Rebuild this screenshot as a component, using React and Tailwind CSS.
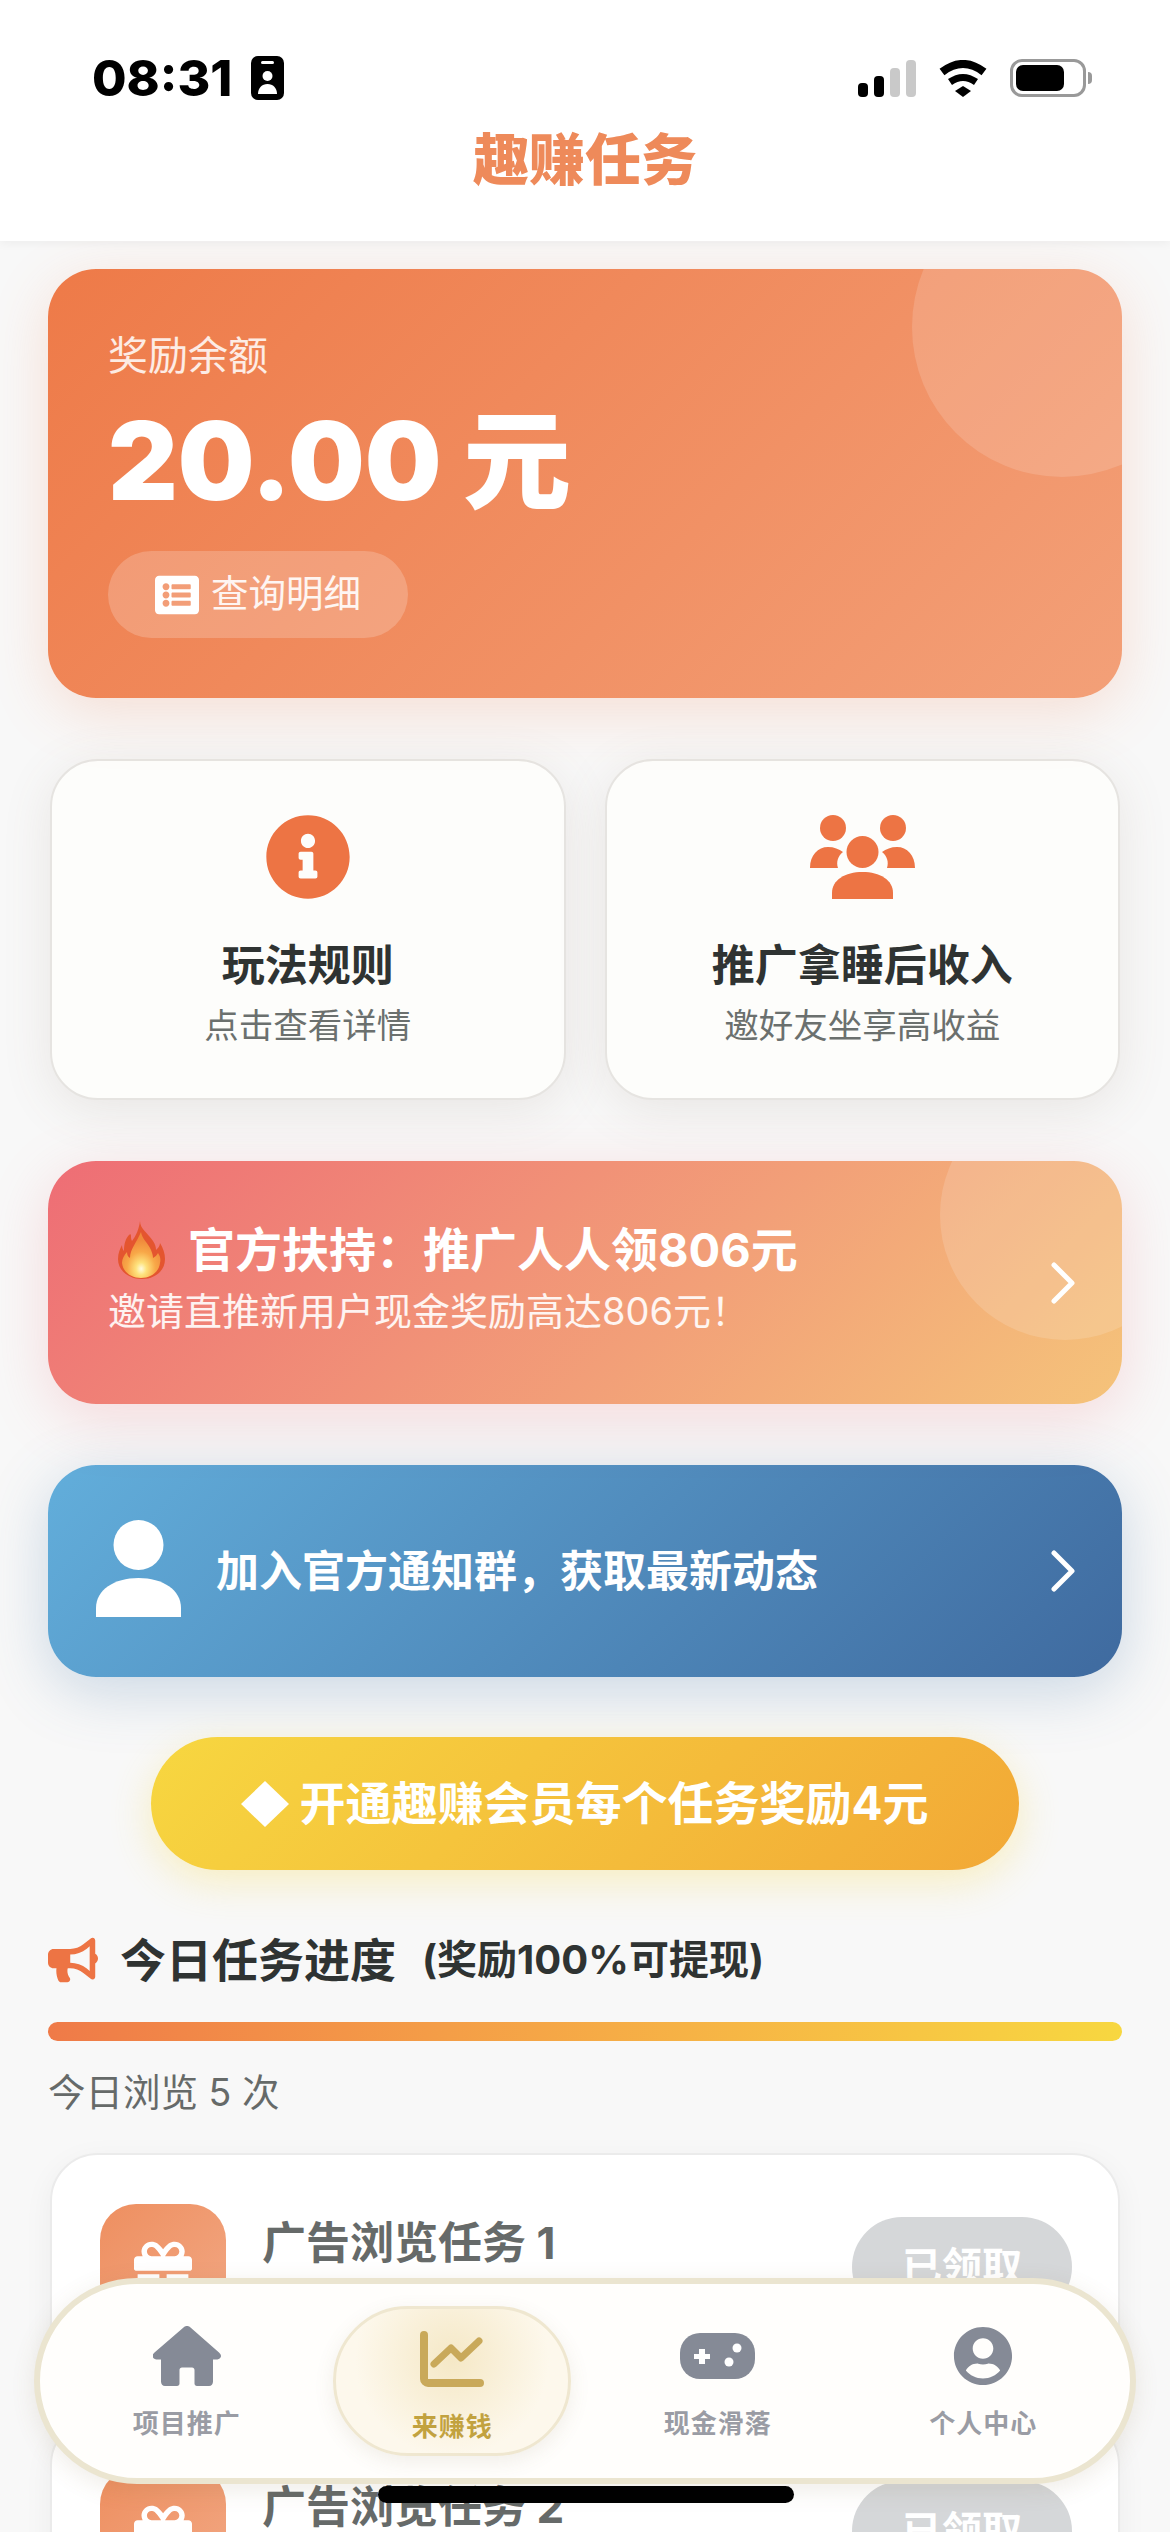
import { FaListAlt, FaInfoCircle, FaBullhorn, FaGift, FaUserCircle } from "react-icons/fa";

const tasks = [
  { id: 1, title: "广告浏览任务 1" },
  { id: 2, title: "广告浏览任务 2" },
];

const HomeIcon = () => (
  <svg width="68" height="60" viewBox="0 0 68 60" fill="currentColor">
    <path d="M34 0c1.500 0 2.500.5 3.500 1.500l28.500 25c2 2 2.500 3.500 1.500 5-1 1.500-2.500 2-4.500 2H60v22c0 2.500-1.500 4.500-4 4.500H44c-1.500 0-2.500-1-2.500-2.500V44c0-1.500-1-2.500-2.500-2.500H29c-1.500 0-2.500 1-2.500 2.500v13.500c0 1.500-1 2.500-2.500 2.500H12c-2.500 0-4-2-4-4.500v-22H4.500c-2 0-3.500-.5-4.500-2s-.5-3 1.500-5l29-25C31.500.5 32.500 0 34 0z" />
  </svg>
);

const ChartIcon = () => (
  <svg width="64" height="56" viewBox="0 0 64 56" fill="none" stroke="currentColor" strokeLinecap="round" strokeLinejoin="round">
    <path d="M4 4v44c0 2 2 4 4 4h52" strokeWidth="8" />
    <path d="M14 33l17-16 10 10 18-17" strokeWidth="7" />
  </svg>
);

const GameIcon = () => (
  <svg width="75" height="46" viewBox="0 0 75 46">
    <rect width="75" height="46" rx="20" fill="currentColor" />
    <path d="M19 16h6v5h5v5h-5v5h-6v-5h-5v-5h5z" fill="#fff" />
    <circle cx="57" cy="15" r="4.500" fill="#fff" />
    <circle cx="49" cy="29" r="4.500" fill="#fff" />
  </svg>
);

const tabs = [
  { label: "项目推广", icon: <HomeIcon /> },
  { label: "来赚钱", icon: <ChartIcon />, active: true },
  { label: "现金滑落", icon: <GameIcon /> },
  { label: "个人中心", icon: <FaUserCircle className="text-[60px]" /> },
];

const Flame = () => (
  <svg width="47" height="58" viewBox="0 0 47 58" className="shrink-0">
    <defs>
      <radialGradient id="fireCore" cx="50%" cy="80%" r="62%">
        <stop offset="0%" stopColor="#fffbe0" />
        <stop offset="22%" stopColor="#fee27c" />
        <stop offset="60%" stopColor="#f8a848" />
        <stop offset="100%" stopColor="#f08a3c" />
      </radialGradient>
    </defs>
    <path d="M22 0c0 8 8 12 13 20 2 3 3 6 3 9 2-2 4-4 4-7 3 5 5 10 5 16 0 12-10 20-23 20S0 50 0 38c0-6 2-10 4-14 0 3 1 5 2 6 0-8 2-13 5-16 1-1 2-1 2 1 0 2 0 3 1 5 4-5 7-12 8-20z" fill="#e4552f" />
    <path d="M23 11c1 7 7 11 10 18 1 3 2 5 2 8 2-1 4-3 5-5 2 3 3 6 2 10-1 9-9 15-19 15S5 51 4 42c0-4 2-8 5-11 0 3 1 5 3 6 0-9 7-16 11-26z" fill="url(#fireCore)" />
  </svg>
);

const Chevron = () => (
  <svg width="26" height="42" viewBox="0 0 26 42" fill="none" stroke="#fff" strokeWidth="5" strokeLinecap="round" strokeLinejoin="round" className="relative shrink-0">
    <path d="M4 3l18 18L4 39" />
  </svg>
);

const UsersIcon = () => (
  <svg width="105" height="84" viewBox="0 0 105 84" fill="currentColor">
    <circle cx="23" cy="13" r="13" />
    <circle cx="83" cy="13" r="13" />
    <circle cx="52.500" cy="37" r="16" />
    <path d="M0 53c0-13 8-21 18-21 6 0 11 2 15 5-5 4-7 10-5 16z" />
    <path d="M105 53c0-13-8-21-18-21-6 0-11 2-15 5 5 4 7 10 5 16z" />
    <path d="M22 84V78c0-13 13-21 30.500-21S83 65 83 78v6z" />
  </svg>
);

const PersonIcon = () => (
  <svg width="85" height="97" viewBox="0 0 85 97" fill="#fff" className="shrink-0 mt-[-5px]">
    <circle cx="42.500" cy="25" r="25" />
    <path d="M0 97V88C0 70 18 58 42.500 58S85 70 85 88v9z" />
  </svg>
);

const StatusBar = () => (
  <div className="flex items-center justify-between pl-[92px] pr-[78px] pt-[52px] h-[104px]">
    <div className="flex items-center gap-[19px]">
      <span className="text-[50px] leading-none font-extrabold text-black">08:31</span>
      <svg width="33" height="44" viewBox="0 0 33 44">
        <rect width="33" height="44" rx="7" fill="#000" />
        <rect x="10" y="5" width="13" height="3" rx="1.500" fill="#fff" />
        <circle cx="16.500" cy="20" r="5" fill="#fff" />
        <path d="M7 38c0-6 4-10 9.500-10S26 32 26 38z" fill="#fff" />
      </svg>
    </div>
    <div className="flex items-center gap-[22px]">
      <div className="flex items-end gap-[6px] h-[37px]">
        <div className="w-[10px] h-[14px] rounded-[4px] bg-black" />
        <div className="w-[10px] h-[21px] rounded-[4px] bg-black" />
        <div className="w-[10px] h-[29px] rounded-[4px] bg-[#c9c9c9]" />
        <div className="w-[10px] h-[37px] rounded-[4px] bg-[#c9c9c9]" />
      </div>
      <svg width="50" height="37" viewBox="0 0 50 37" fill="none" stroke="#000">
        <path d="M4 12Q25-4 46 12" strokeWidth="8" />
        <path d="M12 22Q25 13 38 22" strokeWidth="7" />
        <path d="M17 31l8-5 8 5-8 6z" fill="#000" stroke="none" />
      </svg>
      <div className="flex items-center gap-[2px]">
        <div className="w-[76px] h-[38px] rounded-[12px] border-[3px] border-[#999999] p-[3px]">
          <div className="w-[48px] h-full rounded-[7px] bg-black" />
        </div>
        <div className="w-[4px] h-[12px] rounded-r-full bg-[#999999]" />
      </div>
    </div>
  </div>
);

const InfoCard = ({ icon, title, desc }) => (
  <div className="flex-1 h-[341px] rounded-[48px] bg-[#fdfdfb] border-2 border-[#e6e4e1] shadow-[0_10px_50px_rgba(120,100,80,0.12)] flex flex-col items-center pt-[54px]">
    <div className="h-[84px] flex items-center justify-center text-[#ed7444]">{icon}</div>
    <div className="mt-[38px] text-[43px] leading-[56px] font-bold text-[#2f3332]">{title}</div>
    <div className="mt-[10px] text-[34.500px] leading-[46px] text-[#6b706e]">{desc}</div>
  </div>
);

const TaskCard = ({ title }) => (
  <div className="h-[228px] rounded-[48px] bg-white border-2 border-[#ebebeb] shadow-[0_8px_30px_rgba(0,0,0,0.05)] flex items-center pl-[48px] pr-[46px]">
    <div className="w-[126px] h-[126px] rounded-[36px] bg-[linear-gradient(135deg,#ee8f60,#f2a884)] flex items-center justify-center text-white text-[58px] shrink-0">
      <FaGift />
    </div>
    <div className="ml-[36px] flex-1 self-start pt-[58px] text-[44px] leading-[60px] font-bold text-[#666a69]">{title}</div>
    <div className="w-[220px] h-[100px] rounded-full bg-[#d5d7d9] flex items-center justify-center text-white text-[40px] font-bold">已领取</div>
  </div>
);

const App = () => {
  return (
    <div className="relative w-[1170px] h-[2532px] overflow-hidden bg-[#f8f8f8] font-['Inter','Noto_Sans_CJK_SC',sans-serif]">
      <header className="h-[241px] bg-white shadow-[0_2px_10px_rgba(0,0,0,0.05)] relative z-10">
        <StatusBar />
        <h1 className="text-center mt-[20px] text-[56px] leading-[72px] font-black text-[#ee8a5a]">趣赚任务</h1>
      </header>

      <main className="px-[48px] pt-[28px]">
        <section className="relative overflow-hidden h-[429px] rounded-[48px] bg-[linear-gradient(135deg,#ee7a48,#f3a078)] shadow-[0_14px_60px_rgba(238,122,72,0.2)] pl-[60px] pt-[62px]">
          <div className="absolute right-[-90px] top-[-92px] w-[300px] h-[300px] rounded-full bg-white/15" />
          <div className="text-[40px] leading-[50px] text-white/85">奖励余额</div>
          <div className="mt-[20px] text-[108px] leading-[120px] font-black text-white">20.00 元</div>
          <div className="mt-[30px] w-[300px] h-[87px] rounded-full bg-white/20 flex items-center justify-center gap-[12px] text-white/90 text-[37.500px]">
            <FaListAlt className="text-[44px] text-white" />
            <span>查询明细</span>
          </div>
        </section>

        <section className="mt-[61px] px-[2px] flex gap-[39px]">
          <InfoCard icon={<FaInfoCircle className="text-[86px]" />} title="玩法规则" desc="点击查看详情" />
          <InfoCard icon={<UsersIcon />} title="推广拿睡后收入" desc="邀好友坐享高收益" />
        </section>

        <section className="relative overflow-hidden mt-[61px] h-[243px] rounded-[48px] bg-[linear-gradient(135deg,#ee6d75,#f5c37a)] shadow-[0_14px_60px_rgba(238,110,120,0.22)] flex items-center pl-[60px] pr-[46px]">
          <div className="absolute right-[-68px] top-[-71px] w-[250px] h-[250px] rounded-full bg-white/15" />
          <div className="flex-1">
            <div className="flex items-center gap-[23px] pl-[10px] mt-[-10px]">
              <Flame />
              <span className="text-[47px] leading-[60px] font-bold text-white">官方扶持：推广人人领806元</span>
            </div>
            <div className="mt-[6px] text-[38px] leading-[50px] text-white/90">邀请直推新用户现金奖励高达806元！</div>
          </div>
          <Chevron />
        </section>

        <section className="mt-[61px] h-[212px] rounded-[48px] bg-[linear-gradient(135deg,#62aedb,#3f6a9f)] shadow-[0_14px_60px_rgba(70,120,170,0.26)] flex items-center pl-[48px] pr-[46px]">
          <PersonIcon />
          <div className="ml-[35px] flex-1 text-[43px] leading-[56px] font-bold text-white">加入官方通知群，获取最新动态</div>
          <Chevron />
        </section>

        <div className="mt-[60px] mx-[103px] h-[133px] rounded-full bg-[linear-gradient(135deg,#f7d740,#f2a836)] shadow-[0_12px_40px_rgba(247,215,64,0.3)] flex items-center justify-center gap-[10px] text-white text-[46px] font-bold">
          <svg width="48" height="46" viewBox="0 0 48 46"><path d="M24 0l24 23-24 23L0 23z" fill="#fff" /></svg>
          <span>开通趣赚会员每个任务奖励4元</span>
        </div>

        <div className="mt-[60px] flex items-center h-[60px]">
          <FaBullhorn className="text-[50px] text-[#ed7444]" />
          <span className="ml-[22px] text-[46px] font-bold text-[#2f3332]">今日任务进度</span>
          <span className="ml-[26px] text-[40px] font-bold text-[#2f3332]">(奖励100%可提现)</span>
        </div>

        <div className="mt-[32px] h-[19px] rounded-full bg-gradient-to-r from-[#ef7a48] to-[#f7d740]" />
        <div className="mt-[28px] text-[37.500px] leading-[48px] text-[#666a69]">今日浏览 5 次</div>

        <div className="mt-[36px] px-[2px] flex flex-col gap-[36px]">
          {tasks.map((task) => (
            <TaskCard key={task.id} title={task.title} />
          ))}
        </div>
      </main>

      <nav className="absolute z-20 left-[34px] top-[2278px] w-[1102px] h-[206px] rounded-[103px] bg-[#fffefc] border-[6px] border-[#ebe5d0] shadow-[0_6px_24px_rgba(120,100,60,0.12)] grid grid-cols-4 items-center px-[14px]">
        {tabs.map((tab) => (
          <div key={tab.label} className="flex justify-center">
            <div
              className={`w-[238px] h-[150px] pt-[12px] flex flex-col items-center rounded-full ${
                tab.active ? "bg-[radial-gradient(circle_at_50%_35%,#f5e8c6,#fdf8ec_65%)] border-[3px] border-[#efe7d0] shadow-[0_6px_20px_rgba(120,100,60,0.1)]" : ""
              }`}
            >
              <div className={`h-[76px] flex items-center ${tab.active ? "text-[#c9a95a]" : "text-[#858a96]"}`}>{tab.icon}</div>
              <div className={`mt-[14px] text-[26px] leading-[32px] tracking-[1px] font-semibold ${tab.active ? "text-[#c2a23f]" : "text-[#9a9ca4]"}`}>{tab.label}</div>
            </div>
          </div>
        ))}
      </nav>
      <div className="absolute z-30 left-[378px] top-[2486px] w-[416px] h-[17px] rounded-full bg-black" />
    </div>
  );
};

export default App;
